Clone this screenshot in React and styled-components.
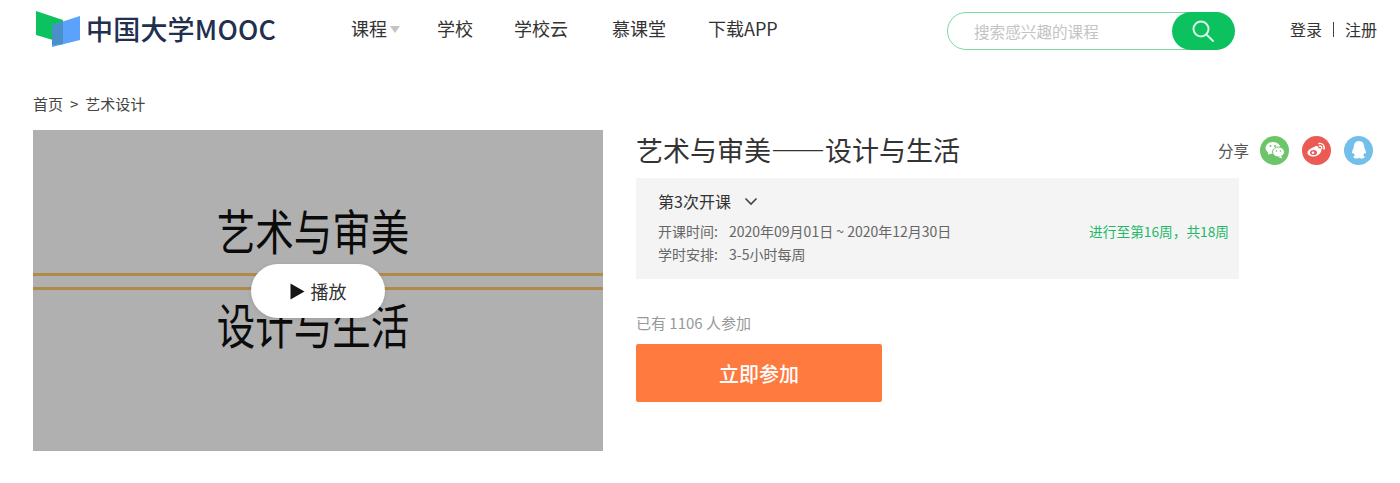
import React from 'react';
import styled, { createGlobalStyle } from 'styled-components';

const Global = createGlobalStyle`
  html, body { margin: 0; padding: 0; background: #fff; }
  body { font-family: "Noto Sans CJK SC", "Noto Sans", sans-serif; color: #333; overflow: hidden; }
  * { box-sizing: border-box; }
`;
const Page = styled.div`width: 1400px; height: 483px; background: #fff;`;
const Header = styled.header`display: flex; align-items: center; height: 60px; padding: 0 0 2px 36px;`;
const Brand = styled.div`display: flex; align-items: center; width: 315px; gap: 6px; height: 40px;`;
const BrandText = styled.span`
  font-family: "Noto Sans CJK SC", sans-serif; font-size: 27px; line-height: 40px; color: #222f4e;
  letter-spacing: 0.2px; white-space: nowrap; font-weight: 500;
`;
const Nav = styled.nav`display: flex; align-items: center; width: 596px; margin-bottom: 2px;`;
const NavItem = styled.a`
  display: flex; align-items: center; font-size: 18px; line-height: 24px; color: #333; white-space: nowrap;
  width: ${p => p.$w}px;
`;
const Caret = styled.i`
  width: 0; height: 0; margin: 3px 0 0 3px; border-left: 5.5px solid transparent; border-right: 5.5px solid transparent;
  border-top: 7px solid #c4c4c4;
`;
const Search = styled.div`
  display: flex; align-items: center; justify-content: space-between; width: 287px; height: 38px; margin-top: 3px;
  border: 1.5px solid #7cd8a4; border-radius: 19px; padding-left: 26px; background: #fff;
`;
const SearchHint = styled.span`font-size: 15.6px; color: #c4c4c4; line-height: 24px;`;
const SearchButton = styled.button`
  display: flex; align-items: center; justify-content: center; width: 63px; height: 38px; margin-right: -1.5px;
  border: 0; padding: 0; border-radius: 19px; background: #0cc25f;
`;
const Auth = styled.div`display: flex; align-items: center; margin-left: 56px; font-size: 16px; color: #333; white-space: nowrap;`;
const AuthDivider = styled.i`width: 1px; height: 15px; background: #444; margin: 0 11px;`;
const Crumbs = styled.div`
  display: flex; align-items: center; gap: 7px; padding-left: 33px; margin-top: 31px; height: 24px;
  font-size: 15px; color: #444;
`;
const Main = styled.main`display: flex; padding-left: 33px; margin-top: 15px;`;
const Player = styled.div`
  position: relative; display: flex; flex-direction: column; align-items: center; justify-content: center;
  width: 570px; height: 321px; background: #b0b0b0; flex: none; padding-bottom: 29px;
`;
const PosterLine = styled.div`
  font-size: 38.5px; line-height: 50px; height: 50px; margin-right: 10px; color: #0b0b0b; font-weight: 400;
  transform: scaleY(1.25); white-space: nowrap;
`;
const PosterRule = styled.div`
  width: 100%; flex: none; height: 17px; margin: 19px 0 8px;
  border-top: 3px solid #b08a48; border-bottom: 3px solid #b08a48;
`;
const PlayButton = styled.button`
  position: absolute; left: 218px; top: 134px; display: flex; align-items: center; justify-content: center; gap: 6px;
  width: 134px; height: 54px; border: 0; border-radius: 27px; background: #fff; font: inherit;
  font-size: 18px; color: #333; box-shadow: 0 1px 4px rgba(0,0,0,.12);
`;
const Info = styled.section`width: 737px; margin-left: 33px; flex: none;`;
const TitleRow = styled.div`display: flex; align-items: center; justify-content: space-between; height: 40px;`;
const Title = styled.h1`
  margin: 0; font-size: 27px; line-height: 40px; font-weight: 400; color: #333; white-space: nowrap;
  font-feature-settings: "fwid";
`;
const Share = styled.div`display: flex; align-items: center; gap: 11px;`;
const ShareLabel = styled.span`font-size: 15.5px; color: #555;`;
const ShareIcon = styled.span`
  display: flex; align-items: center; justify-content: center; width: 29px; height: 29px; border-radius: 50%;
  background: ${p => p.$c}; margin-left: ${p => p.$gap || 0}px;
`;
const Term = styled.div`width: 603px; height: 101px; background: #f4f4f4; margin-top: 8px; padding: 11px 10px 0 22px;`;
const TermHead = styled.div`display: flex; align-items: center; gap: 13px; height: 24px; font-size: 16px; color: #333;`;
const TermRows = styled.div`margin-top: 7px;`;
const TermRow = styled.div`
  display: flex; justify-content: space-between; height: 23px; line-height: 23px; font-size: 14px; color: #666;
`;
const TermKey = styled.span`display: inline-block; width: 71px;`;
const Progress = styled.span`color: #23b868; font-size: 13.7px;`;
const Count = styled.div`margin-top: 33px; font-size: 15px; line-height: 22px; color: #999;`;
const Join = styled.button`
  display: block; width: 246px; height: 58px; margin-top: 10px; border: 0; border-radius: 2px; background: #ff7a3f;
  color: #fff; font: inherit; font-size: 20px; font-weight: 500;
`;

const Logo = () => (
  <svg width="44" height="37" viewBox="0 0 44 37">
    <path d="M0 0L27 9V32L0 24z" fill="#0cc25f" />
    <path d="M16 14L44 5V29L16 36z" fill="#5aa2fb" />
    <path d="M16 14L27 10.500V33.200L16 34z" fill="#4a90c8" />
  </svg>
);

export default function App() {
  return (
    <Page>
      <Global />
      <Header>
        <Brand>
          <Logo />
          <BrandText>中国大学MOOC</BrandText>
        </Brand>
        <Nav>
          <NavItem $w={86}>课程<Caret /></NavItem>
          <NavItem $w={77}>学校</NavItem>
          <NavItem $w={98}>学校云</NavItem>
          <NavItem $w={96}>慕课堂</NavItem>
          <NavItem $w={100}>下载APP</NavItem>
        </Nav>
        <Search>
          <SearchHint>搜索感兴趣的课程</SearchHint>
          <SearchButton aria-label="搜索">
            <svg width="24" height="24" viewBox="0 0 24 24" fill="none" stroke="#d8f5e5" strokeWidth="2">
              <circle cx="10" cy="10" r="7.500" />
              <path d="M15.500 15.500L22 22" strokeLinecap="round" />
            </svg>
          </SearchButton>
        </Search>
        <Auth>登录<AuthDivider />注册</Auth>
      </Header>
      <Crumbs><span>首页</span><span>&gt;</span><span>艺术设计</span></Crumbs>
      <Main>
        <Player>
          <PosterLine>艺术与审美</PosterLine>
          <PosterRule />
          <PosterLine>设计与生活</PosterLine>
          <PlayButton>
            <svg width="15" height="17" viewBox="0 0 15 17"><path d="M0.500 0.500L14.500 8.500L0.500 16.500z" fill="#161616" /></svg>
            播放
          </PlayButton>
        </Player>
        <Info>
          <TitleRow>
            <Title>艺术与审美——设计与生活</Title>
            <Share>
              <ShareLabel>分享</ShareLabel>
              <ShareIcon $c="#6dc56a">
                <svg width="20" height="18" viewBox="0 0 20 18" fill="#fff">
                  <ellipse cx="8" cy="7" rx="7.500" ry="6" />
                  <path d="M3.500 10.500L3 14l4-2.500z" />
                  <ellipse cx="13.500" cy="11" rx="6" ry="5" stroke="#6dc56a" strokeWidth="1" />
                  <path d="M16 15l1.500 2.500L13 16z" />
                  <circle cx="5.500" cy="5" r="1" fill="#6dc56a" />
                  <circle cx="10" cy="5" r="1" fill="#6dc56a" />
                  <circle cx="11.500" cy="10" r=".8" fill="#6dc56a" />
                  <circle cx="15.500" cy="10" r=".8" fill="#6dc56a" />
                </svg>
              </ShareIcon>
              <ShareIcon $c="#ec5a54" $gap={2}>
                <svg width="21" height="19" viewBox="0 0 21 19" fill="none">
                  <path d="M8 6C11 4 13 5 12.500 7.500 15.500 6.800 16 9 15 10.800 13.600 14 9.500 16 6 15.500 2.500 15 1 13 1.500 11 2 9 5 7 8 6z" fill="#fff" />
                  <ellipse cx="7.500" cy="11.500" rx="3.500" ry="2.600" fill="#ec5a54" />
                  <circle cx="7" cy="11.700" r="1.300" fill="#fff" />
                  <path d="M13 2.500c3-.8 6 2 5 5.500M13.500 5c1.500-.3 2.600 1 2.200 2.500" stroke="#fff" strokeWidth="1.400" strokeLinecap="round" />
                </svg>
              </ShareIcon>
              <ShareIcon $c="#72c0ea" $gap={2}>
                <svg width="18" height="20" viewBox="0 0 18 20" fill="#fff">
                  <path d="M9 1c3.500 0 5.200 2.800 5.200 6 0 1 1.800 3.500 1.800 5.500 0 1.300-.8 1.500-1.800.4-.2 1.100-.7 1.800-1.300 2.400 1 .4 1.700 1 1.700 1.700 0 1-2 1.500-3.500 1.500-1 0-1.700-.3-2.100-.7-.4.400-1.100.7-2.100.7-1.500 0-3.500-.5-3.500-1.500 0-.7.700-1.300 1.700-1.700-.6-.6-1.100-1.300-1.300-2.400-1 1.100-1.800.9-1.800-.4 0-2 1.800-4.500 1.800-5.500C3.800 3.800 5.500 1 9 1z" />
                </svg>
              </ShareIcon>
            </Share>
          </TitleRow>
          <Term>
            <TermHead>
              第3次开课
              <svg width="14" height="9" viewBox="0 0 14 9" fill="none" stroke="#444" strokeWidth="1.600"><path d="M1.500 1.500L7 7l5.500-5.500" /></svg>
            </TermHead>
            <TermRows>
              <TermRow>
                <span><TermKey>开课时间:</TermKey>2020年09月01日 ~ 2020年12月30日</span>
                <Progress>进行至第16周，共18周</Progress>
              </TermRow>
              <TermRow>
                <span><TermKey>学时安排:</TermKey>3-5小时每周</span>
              </TermRow>
            </TermRows>
          </Term>
          <Count>已有 1106 人参加</Count>
          <Join>立即参加</Join>
        </Info>
      </Main>
    </Page>
  );
}
